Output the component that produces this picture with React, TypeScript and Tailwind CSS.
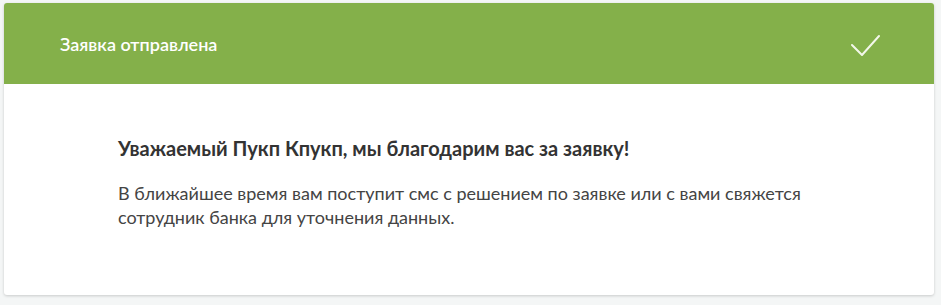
export default function App() {
  return (
    <div className="w-[941px] h-[305px] bg-[#f4f6f6] pt-[3px] pl-[4px]" style={{ fontFamily: 'Lato, "Noto Sans", sans-serif' }}>
      <div className="w-[930px] h-[292px] bg-white rounded-[3px] shadow-[0_1px_3px_rgba(0,0,0,0.18)] overflow-hidden flex flex-col">
        <div className="h-[81px] bg-[#84b04a] flex items-center justify-between pl-[56px] pr-[54px]">
          <span className="text-white text-[18px] font-semibold leading-[24px]">Заявка отправлена</span>
          <svg width="30" height="24" viewBox="0 0 30 24" fill="none">
            <path d="M2 13 L12 23 L29 4" stroke="#f3f7ea" strokeWidth="2" strokeLinecap="round" strokeLinejoin="round" />
          </svg>
        </div>
        <div className="pl-[114px] pt-[50px]">
          <h1 className="text-[20px] font-bold text-[#333333] leading-[28px]">Уважаемый Пукп Кпукп, мы благодарим вас за заявку!</h1>
          <p className="mt-[19px] text-[18px] leading-[24px] text-[#444444] w-[720px]">
            В ближайшее время вам поступит смс с решением по заявке или с вами свяжется сотрудник банка для уточнения данных.
          </p>
        </div>
      </div>
    </div>
  );
}
